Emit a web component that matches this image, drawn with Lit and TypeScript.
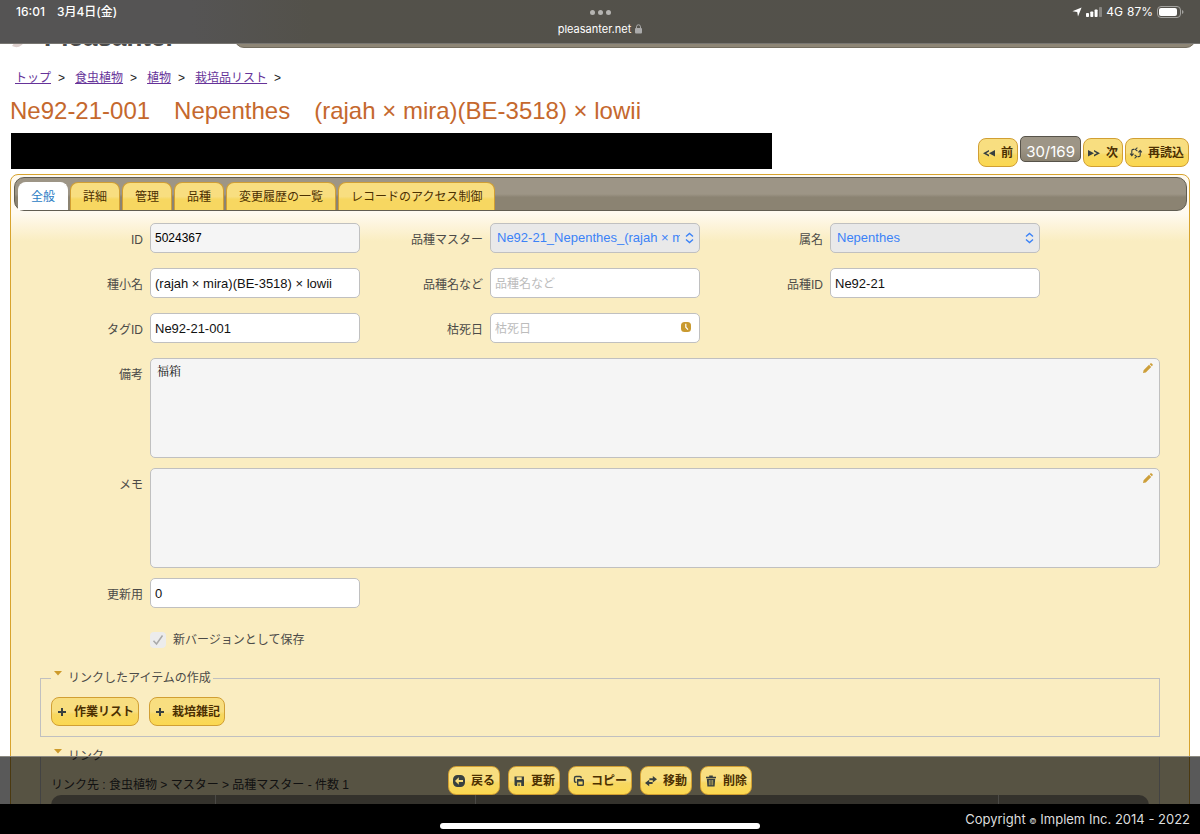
import { LitElement, html, css, svg, nothing, TemplateResult } from "lit";
import { customElement, property, state } from "lit/decorators.js";
import { classMap } from "lit/directives/class-map.js";

const glyphs: Record<string, TemplateResult> = {
  prev: svg`<path d="M7 4 1 7.200 7 10.400V8.800L4.200 7.200 7 5.600z M13 4 7 7.200 13 10.400z" />`,
  next: svg`<path d="M1 4 7 7.200 1 10.400z M7 4 13 7.200 7 10.400V8.800L9.800 7.200 7 5.600z" />`,
  reload: svg`<path d="M5.400 3.400H4.200Q2.800 3.400 2.800 4.800V8.600M1.200 7.600 2.800 9.600 4.600 7.600M8.600 10.600H9.800Q11.200 10.600 11.200 9.200V5.400M9.400 6.400 11.200 4.400 12.800 6.400M8.400 1.600 6.400 3.400 8.400 5.200M5.600 8.800 7.600 10.600 5.600 12.400" fill="none" stroke="currentColor" stroke-width="1.100" />`,
  plus: svg`<path d="M6 3h2v3h3v2H8v3H6V8H3V6h3z" />`,
  back: svg`<path fill-rule="evenodd" d="M5.500 1h3A4.500 4.500 0 0 1 13 5.500v3A4.500 4.500 0 0 1 8.500 13h-3A4.500 4.500 0 0 1 1 8.500v-3A4.500 4.500 0 0 1 5.500 1z M6.800 3.200 3 7l3.800 3.800V8H11V6H6.800z" />`,
  save: svg`<path fill-rule="evenodd" d="M2.500 2.500h9.500v9.500H3.400l-.9-.9z M4.700 3.200v2.800h5V3.200z M5.200 8.500v3.500h1.200v-2.200h1.200v2.200h1.600V8.500z" />`,
  copy: svg`<path d="M4.500 8.300H3.600A1.100 1.100 0 0 1 2.500 7.200V4A1.500 1.500 0 0 1 4 2.500h4A1.200 1.200 0 0 1 9.200 3.700v.6" fill="none" stroke="currentColor" stroke-width="1.400" /><path fill-rule="evenodd" d="M5.500 5H10.500A1.500 1.500 0 0 1 12 6.500v4A1.500 1.500 0 0 1 10.500 12h-4A1.500 1.500 0 0 1 5 10.500V5z M6.400 7.600v2.900h4.200V7.600z" />`,
  move: svg`<path d="M8.800 2 13 5.200 8.800 8.400V6.200H5.400V4.200H8.800z M5.200 5.800 1 9 5.200 12.200V10H8.600V8H5.200z" />`,
  trash: svg`<path d="M5.200 1.500h3.600v1.200H12v1.500H2V2.700h3.200z" /><path fill-rule="evenodd" d="M2.800 4.800h8.400l-.6 7.700H3.400z M4.900 6v5.200h.6V6z M6.700 6v5.200h.6V6z M8.500 6v5.200h.6V6z" />`,
};

const icon = (name: string) =>
  html`<svg class="glyph" viewBox="0 0 14 14" aria-hidden="true">${glyphs[name]}</svg>`;

/* Rounded yellow command button with a leading glyph. */
@customElement("cmd-button")
class CmdButton extends LitElement {
  @property() icon = "";
  @property() label = "";

  static styles = css`
    :host {
      display: block;
    }
    button {
      display: flex;
      align-items: center;
      gap: 5px;
      height: 29px;
      padding: 0 4px 0 3px;
      border: 1px solid #d19f33;
      border-radius: 8px;
      background: linear-gradient(#f8de80 0 50%, #f7d761 60%, #fbd850);
      color: #4c3000;
      font: bold 12px/18px "Liberation Sans", "Noto Sans CJK JP", sans-serif;
      white-space: nowrap;
    }
    .glyph {
      width: 14px;
      height: 14px;
      fill: #38403f;
      color: #38403f;
    }
  `;

  render() {
    return html`<button type="button">${icon(this.icon)}<span>${this.label}</span></button>`;
  }
}

interface Field {
  id: string;
  label: string;
  value?: string;
  placeholder?: string;
  kind?: "text" | "readonly" | "select" | "date" | "memo";
}

const fields: Field[] = [
  { id: "record-id", label: "ID", value: "5024367", kind: "readonly" },
  { id: "master", label: "品種マスター", value: "Ne92-21_Nepenthes_(rajah × mira)(BE-3518)", kind: "select" },
  { id: "genus", label: "属名", value: "Nepenthes", kind: "select" },
  { id: "species", label: "種小名", value: "(rajah × mira)(BE-3518) × lowii" },
  { id: "cultivar", label: "品種名など", placeholder: "品種名など" },
  { id: "variety-id", label: "品種ID", value: "Ne92-21" },
  { id: "tag-id", label: "タグID", value: "Ne92-21-001" },
  { id: "died", label: "枯死日", placeholder: "枯死日", kind: "date" },
  { id: "note", label: "備考", value: "福箱", kind: "memo" },
  { id: "memo", label: "メモ", value: "", kind: "memo" },
  { id: "update", label: "更新用", value: "0" },
];

const tabs = ["全般", "詳細", "管理", "品種", "変更履歴の一覧", "レコードのアクセス制御"];
const crumbs = ["トップ", "食虫植物", "植物", "栽培品リスト"];

@customElement("app-root")
class AppRoot extends LitElement {
  @state() private tab = 0;

  static styles = css`
    :host {
      display: block;
      position: relative;
      height: 100vh;
      overflow: hidden;
      background: #fff;
      color: #4c4b48;
      font: 12px/18px "Liberation Sans", "Noto Sans CJK JP", sans-serif;
    }
    * {
      box-sizing: border-box;
    }

    /* device status bar */
    .status {
      position: absolute;
      inset: 0 0 auto;
      z-index: 2;
      display: grid;
      grid-template-columns: 1fr auto 1fr;
      height: 44px;
      padding: 3px 16px 0;
      border-bottom: 1px solid #777571;
      background: linear-gradient(90deg, #555454, #555454 16%, #53514a 26%, #53514b);
      color: #fff;
      font: 12px/18px Inter, "Noto Sans CJK JP", sans-serif;
    }
    .clock {
      display: flex;
      gap: 12px;
      font-weight: 500;
    }
    .site {
      display: flex;
      flex-direction: column;
      align-items: center;
      font-size: 11px;
    }
    .dots {
      display: flex;
      gap: 3px;
      padding: 7px 0 5px;
    }
    .dots i {
      width: 5px;
      height: 5px;
      border-radius: 50%;
      background: #b5b4b1;
    }
    .host {
      display: flex;
      align-items: center;
      gap: 4px;
    }
    .host svg {
      width: 7px;
      height: 10px;
    }
    .signal {
      display: flex;
      justify-content: flex-end;
      align-items: center;
      height: 18px;
      gap: 4px;
    }
    .arrow {
      width: 10px;
      height: 10px;
    }
    .bars {
      width: 16px;
      height: 10px;
    }
    .battery {
      width: 27px;
      height: 12px;
    }

    /* page top */
    .masthead {
      display: flex;
      align-items: flex-end;
      height: 48px;
      padding-right: 4px;
    }
    .brand {
      display: flex;
      align-items: flex-end;
      width: 234px;
      padding-left: 12px;
      color: #4a4a4a;
      font: bold 26px/32px "Liberation Sans", sans-serif;
      gap: 16px;
    }
    .brand svg {
      width: 16px;
      height: 30px;
    }
    .brand span {
      margin-bottom: -5px;
    }
    .menu {
      flex: 1;
      height: 40px;
      border: 1px solid #736d5f;
      border-radius: 10px;
      background: #8e8676;
    }
    .crumbs {
      display: flex;
      gap: 10px;
      margin: 0;
      padding: 21px 15px 0;
      list-style: none;
      color: #222;
    }
    .crumbs li {
      display: flex;
      gap: 7px;
    }
    .crumbs a {
      color: #663399;
    }
    h1 {
      margin: 8px 10px 0;
      color: #c5682d;
      font: 400 24px/32px "Liberation Sans", "Noto Sans CJK JP", sans-serif;
    }
    .toolbar {
      display: flex;
      justify-content: space-between;
      align-items: flex-start;
      margin: 6px 11px 0;
    }
    .comment {
      width: 64.6%;
      height: 36px;
      background: #000;
    }
    .pager {
      display: flex;
      align-items: flex-start;
      gap: 2px;
      padding-top: 3px;
    }
    .pager cmd-button {
      padding-top: 2px;
    }
    .count {
      padding: 5px 5px 0;
      border: 1px solid #57534a;
      border-radius: 5px;
      background: linear-gradient(#9d9586 0 45%, #8a8271);
      color: #fff;
      font: 15px/19px Inter, sans-serif;
    }

    /* tabbed panel */
    .panel {
      margin: 5px 10px 0;
      padding: 2px 2px 0 3px;
      border: 1px solid #d7a32e;
      border-radius: 8px 8px 0 0;
      background: linear-gradient(#fffaf0 38px, #faedc1 66px);
    }
    .tabs {
      display: flex;
      align-items: flex-end;
      gap: 2px;
      height: 34px;
      padding: 0 3px;
      border: 1px solid #615d52;
      border-radius: 10px;
      background: linear-gradient(#9d9586 0 50%, #8b8372 60%);
    }
    .tab {
      height: 28px;
      padding: 0 12px;
      border: 1px solid #d19f33;
      border-bottom: 0;
      border-radius: 8px 8px 0 0;
      background: linear-gradient(#f8de80 0 50%, #f7d761 60%);
      color: #4c3000;
      font: inherit;
      white-space: nowrap;
    }
    .tab.on {
      border-color: #fff;
      background: #fff;
      color: #2b7cc4;
    }
    .form {
      display: flex;
      flex-wrap: wrap;
      padding: 12px 27px 0 6px;
    }
    .field {
      display: flex;
      width: 340px;
      margin-bottom: 15px;
    }
    .field.full {
      width: 100%;
    }
    .field.memo {
      width: 100%;
      margin-bottom: 10px;
    }
    .field > label {
      width: 130px;
      padding: 8px 7px 0 0;
      text-align: right;
    }
    .box {
      position: relative;
      display: flex;
      width: 210px;
    }
    .memo .box {
      flex: 1;
    }
    .box input,
    .box select,
    .box textarea {
      width: 100%;
      height: 30px;
      margin: 0;
      padding: 0 4px;
      border: 1px solid #c0c0c0;
      border-radius: 5px;
      background: #fff;
      color: #111;
      font: 13px/18px "Liberation Sans", "Noto Sans CJK JP", sans-serif;
    }
    .box input::placeholder {
      color: #bcbcbc;
      font-size: 12px;
    }
    .box input.readonly {
      background: #f5f5f5;
      color: #000;
      font: 12px/18px "Liberation Sans", sans-serif;
    }
    .box select {
      appearance: none;
      padding: 0 19px 0 6px;
      background: #e9e9e9;
      color: #3b82f7;
      opacity: 1;
    }
    .box textarea {
      height: 100px;
      padding: 3px 6px;
      background: #f5f5f5;
      font: 12px/18px "Noto Serif CJK JP", "Liberation Serif", "Noto Sans CJK JP", serif;
      resize: none;
    }
    .updown {
      position: absolute;
      right: 6px;
      top: 9px;
      width: 9px;
      height: 12px;
      pointer-events: none;
    }
    .pick {
      position: absolute;
      right: 9px;
      top: 9px;
      width: 10px;
      height: 10px;
      padding: 0;
      border: 0;
      background: none;
    }
    .memo .pick {
      right: 7px;
      top: 5px;
    }
    .pick svg {
      display: block;
      width: 10px;
      height: 10px;
    }
    .check {
      display: flex;
      align-items: center;
      gap: 7px;
      width: 100%;
      padding: 8px 0 0 130px;
      margin-bottom: 20px;
    }
    .check input {
      appearance: none;
      width: 16px;
      height: 16px;
      margin: 0;
      border-radius: 4px;
      background: #ececec
        url("data:image/svg+xml,%3Csvg xmlns='http://www.w3.org/2000/svg' viewBox='0 0 16 16'%3E%3Cpath d='M3.500 8.800 6.500 12 12.500 3.500' fill='none' stroke='%23a9a9a9' stroke-width='1.500'/%3E%3C/svg%3E");
    }
    fieldset {
      min-width: 0;
      margin: 0 27px 10px 26px;
      padding: 10px 10px 10px;
      border: 1px solid #c0c0c0;
    }
    legend {
      display: flex;
      gap: 6px;
      padding: 0 2px 0 3px;
    }
    legend svg {
      width: 8px;
      height: 5px;
      margin-top: 2px;
    }
    .row {
      display: flex;
      gap: 10px;
    }
    .linked {
      width: 100%;
      border-collapse: separate;
      border-spacing: 0;
      table-layout: fixed;
    }
    .linked caption {
      padding: 1px 0 1px;
      text-align: left;
      color: #333;
    }
    .linked th {
      height: 30px;
      background: #968f7f;
      border-right: 1px solid #d8d4c8;
    }
    .linked th:first-child {
      width: 15%;
      border-top-left-radius: 10px;
    }
    .linked th:nth-child(2) {
      width: 23.7%;
    }
    .linked th:last-child {
      width: 13.7%;
      border-right: 0;
      border-top-right-radius: 10px;
    }

    /* bottom bars */
    .bottom {
      position: absolute;
      inset: auto 0 0;
      z-index: 1;
    }
    .commands {
      display: flex;
      justify-content: center;
      gap: 8px;
      height: 48px;
      padding-top: 9px;
      border-top: 1px solid #8c8a82;
      background: rgba(0, 0, 0, 0.65);
    }
    footer {
      display: grid;
      grid-template-columns: 1fr 320px 1fr;
      height: 30px;
      padding: 0 10px;
      background: #000;
      color: #ddd;
      font: 13px/30px Inter, sans-serif;
    }
    footer i {
      grid-column: 2;
      align-self: end;
      height: 6px;
      margin-bottom: 7px;
      border-radius: 3px;
      background: #fff;
    }
    footer span {
      text-align: right;
      white-space: nowrap;
    }
    footer small {
      font-size: 8px;
    }
  `;

  private control(f: Field) {
    switch (f.kind) {
      case "select":
        return html`<select id=${f.id}><option>${f.value}</option></select>
          <svg class="updown" viewBox="0 0 9 12" fill="none" stroke="#3b82f7" stroke-width="1.400" aria-hidden="true">
            <path d="M1 4.500 4.500 1.500 8 4.500M1 7.500 4.500 10.500 8 7.500" />
          </svg>`;
      case "memo":
        return html`<textarea id=${f.id} readonly .value=${f.value ?? ""}></textarea>
          <button class="pick" type="button" aria-label="編集">
            <svg viewBox="0 0 10 10" fill="#cd9f3a">
              <path d="M0 10 .6 7.200 6 1.800 8.200 4 2.800 9.400z M6.700 1.200 7.600.3Q8.200-.1 8.800.5L9.500 1.200Q10 1.800 9.600 2.400L8.800 3.300z" />
            </svg>
          </button>`;
      case "date":
        return html`<input id=${f.id} type="text" placeholder=${f.placeholder ?? ""} />
          <button class="pick" type="button" aria-label="日付">
            <svg viewBox="0 0 10 10">
              <rect width="10" height="10" rx="3.500" fill="#c99a30" />
              <path d="M4.800 1.800V5.200L7 7.600" fill="none" stroke="#fff" stroke-width="1.200" />
            </svg>
          </button>`;
      default:
        return html`<input
          id=${f.id}
          type="text"
          class=${classMap({ readonly: f.kind === "readonly" })}
          ?readonly=${f.kind === "readonly"}
          .value=${f.value ?? ""}
          placeholder=${f.placeholder ?? nothing}
        />`;
    }
  }

  private legend(text: string) {
    return html`<legend>
      <svg viewBox="0 0 8 5" fill="#cd9a2a" aria-hidden="true"><path d="M0 0h8L4 4.500z" /></svg>${text}
    </legend>`;
  }

  render() {
    return html`
      <div class="status">
        <div class="clock"><span>16:01</span><span>3月4日(金)</span></div>
        <div class="site">
          <div class="dots"><i></i><i></i><i></i></div>
          <div class="host">
            pleasanter.net
            <svg viewBox="0 0 7 10" aria-hidden="true">
              <rect y="4" width="7" height="5.500" rx="1" fill="#aaa" />
              <path d="M1.500 4.500V2.800a2 2 0 0 1 4 0V4.500" fill="none" stroke="#aaa" />
            </svg>
          </div>
        </div>
        <div class="signal">
          <svg class="arrow" viewBox="0 0 10 10" fill="#fff"><path d="M9.600.4 6 9.600 5.200 4.900.4 4.200z" /></svg>
          <svg class="bars" viewBox="0 0 16 10" fill="#fff">
            <rect y="6" width="3" height="4" rx=".8" /><rect x="4.300" y="4.500" width="3" height="5.500" rx=".8" />
            <rect x="8.600" y="2.500" width="3" height="7.500" rx=".8" />
            <rect x="13" width="3" height="10" rx=".8" opacity=".3" />
          </svg>
          <span>4G</span><span>87%</span>
          <svg class="battery" viewBox="0 0 27 12">
            <rect x=".5" y=".5" width="23" height="11" rx="3.500" fill="none" stroke="#a3a29f" />
            <rect x="2" y="2" width="18" height="8" rx="2" fill="#fff" />
            <path d="M25 4v4q1.500-.5 1.500-2T25 4z" fill="#a3a29f" />
          </svg>
        </div>
      </div>

      <header class="masthead">
        <div class="brand">
          <svg viewBox="0 0 16 30" aria-hidden="true"><path d="M0 28Q8 32 14 22V10z" fill="#dccfcd" /></svg>
          <span>Pleasanter</span>
        </div>
        <div class="menu"></div>
      </header>
      <nav>
        <ul class="crumbs">
          ${crumbs.map((c) => html`<li><a href="#">${c}</a><span>&gt;</span></li>`)}
        </ul>
      </nav>
      <h1>Ne92-21-001　Nepenthes　(rajah × mira)(BE-3518) × lowii</h1>
      <div class="toolbar">
        <div class="comment"></div>
        <div class="pager">
          <cmd-button icon="prev" label="前"></cmd-button>
          <div class="count">30/169</div>
          <cmd-button icon="next" label="次"></cmd-button>
          <cmd-button icon="reload" label="再読込"></cmd-button>
        </div>
      </div>

      <main class="panel">
        <div class="tabs" role="tablist">
          ${tabs.map(
            (t, i) => html`<button
              type="button"
              role="tab"
              aria-selected=${i === this.tab}
              class=${classMap({ tab: true, on: i === this.tab })}
              @click=${() => (this.tab = i)}
            >${t}</button>`
          )}
        </div>
        <form class="form">
          ${fields.map(
            (f) => html`<div class=${classMap({ field: true, memo: f.kind === "memo", full: f.id === "update" })}>
              <label for=${f.id}>${f.label}</label>
              <div class="box">${this.control(f)}</div>
            </div>`
          )}
          <div class="check">
            <input id="new-version" type="checkbox" checked disabled />
            <label for="new-version">新バージョンとして保存</label>
          </div>
        </form>
        <fieldset>
          ${this.legend("リンクしたアイテムの作成")}
          <div class="row">
            <cmd-button icon="plus" label="作業リスト"></cmd-button>
            <cmd-button icon="plus" label="栽培雑記"></cmd-button>
          </div>
        </fieldset>
        <fieldset>
          ${this.legend("リンク")}
          <table class="linked">
            <caption>リンク先 : 食虫植物 &gt; マスター &gt; 品種マスター - 件数 1</caption>
            <thead><tr><th></th><th></th><th></th><th></th></tr></thead>
          </table>
        </fieldset>
      </main>

      <div class="bottom">
        <div class="commands">
          <cmd-button icon="back" label="戻る"></cmd-button>
          <cmd-button icon="save" label="更新"></cmd-button>
          <cmd-button icon="copy" label="コピー"></cmd-button>
          <cmd-button icon="move" label="移動"></cmd-button>
          <cmd-button icon="trash" label="削除"></cmd-button>
        </div>
        <footer>
          <i></i>
          <span>Copyright <small>©</small> Implem Inc. 2014 - 2022</span>
        </footer>
      </div>
    `;
  }
}
